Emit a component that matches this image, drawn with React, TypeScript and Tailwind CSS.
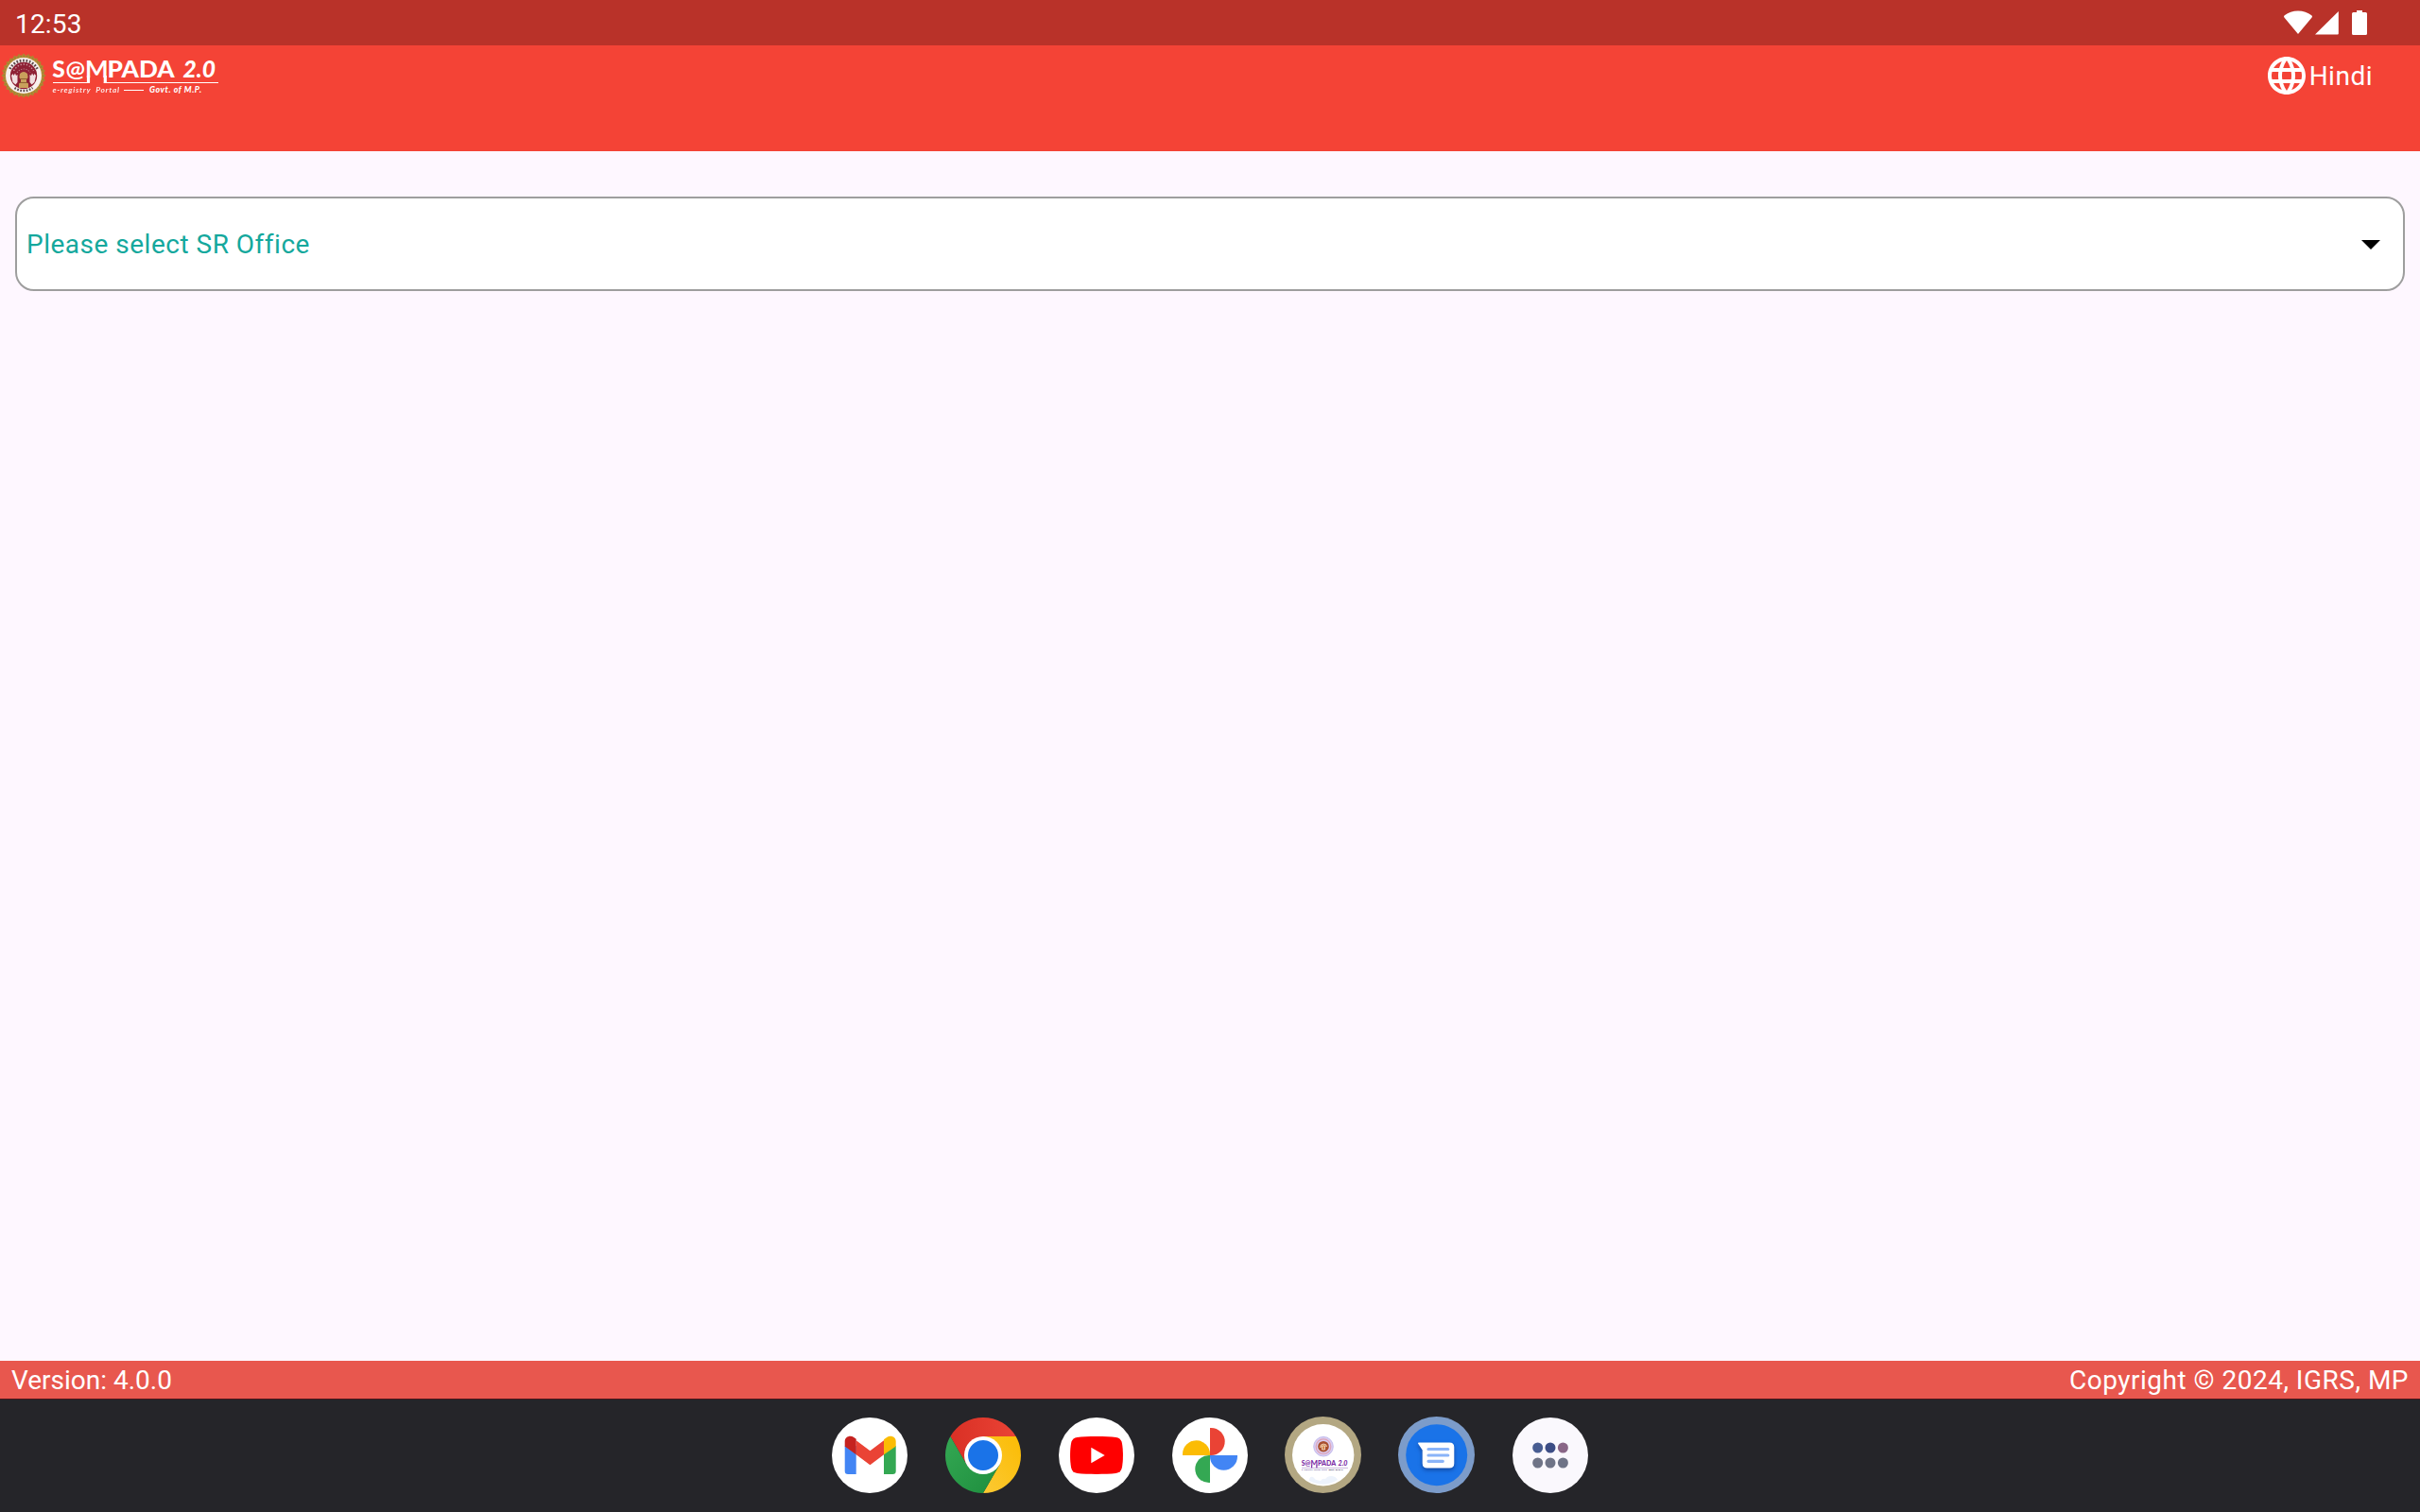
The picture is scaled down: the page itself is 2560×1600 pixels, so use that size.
import type { ReactNode } from "react";
import { MdArrowDropDown, MdLanguage } from "react-icons/md";

const BEADS = Array.from({ length: 28 }, (_, i) => (i * 360) / 28);

function Emblem() {
    return (
        <svg viewBox="-1 0 48 48" className="h-12 w-12 shrink-0 overflow-visible">
            <circle cx="24" cy="24" r="21.8" fill="#b98a35" />
            {BEADS.map((deg) => (
                <circle
                    key={deg}
                    cx="24"
                    cy="2"
                    r="1.3"
                    fill="#b5812f"
                    transform={`rotate(${deg} 24 24)`}
                />
            ))}
            <circle cx="24" cy="24" r="20.6" fill="none" stroke="#8f8a3c" strokeWidth="1.4" strokeDasharray="1.6 1.6" />
            <circle cx="24" cy="24" r="19" fill="#f8f1ee" />
            <path d="M9.500 17a16.200 16.200 0 0 1 29 0" fill="none" stroke="#5d4a4c" strokeWidth="2.800" strokeDasharray="1.700 1.700" />
            <path d="M14.500 37a16.200 16.200 0 0 0 19 0" fill="none" stroke="#5d4a4c" strokeWidth="2.400" strokeDasharray="1.700 1.500" />
            <circle cx="24" cy="24" r="14.2" fill="#8e2034" />
            <path d="M13.500 19c3-5 7-7 10.500-7s7.500 2 10.500 7" fill="none" stroke="#c9929a" strokeWidth="1.400" strokeDasharray="1.400 1.800" />
            <path d="M17 21c2-3 4.500-4 7-4s5 1 7 4" fill="none" stroke="#b97a84" strokeWidth="1.100" strokeDasharray="1.200 1.500" />
            <path d="M11 24l1.500-2 1 2 1.500-2.500 1 2.500 1.500-1v8l-2 2.500-3-2.500zM37 24l-1.500-2-1 2-1.500-2.500-1 2.500-1.500-1v8l2 2.500 3-2.500z" fill="#f1dfe0" />
            <path d="M20 22q4-4 8 0l.600 4-1.600 2v3l2 1.500V37H19v-4.500l2-1.500v-3L19.400 26z" fill="#c9a05c" />
            <path d="M20.500 27.500h7M20 31.500h8" stroke="#8a5a2c" strokeWidth=".9" />
        </svg>
    );
}

function Logo() {
    return (
        <div className="flex h-16">
            <Emblem />
            <svg
                viewBox="0 0 180 48"
                className="h-12 w-[180px] shrink-0 overflow-visible"
                fill="#fff"
                fontFamily="Lato, sans-serif"
            >
                <text x="7.300" y="26.300" fontSize="24.500" fontWeight="900" textLength="13.500" lengthAdjust="spacingAndGlyphs">S</text>
                <text x="21.500" y="25.300" fontSize="22" fontWeight="700" textLength="20.500" lengthAdjust="spacingAndGlyphs">@</text>
                {/* the stems of the M run down into the underline */}
                <text x="42.100" y="26.300" fontSize="24.500" fontWeight="700" textLength="24.600" lengthAdjust="spacingAndGlyphs">M</text>
                <path d="M45.500 24v7.500M63.300 24v7.500" stroke="#fff" strokeWidth="3.200" />
                <text x="65.500" y="26.300" fontSize="24.500" fontWeight="900" textLength="71" lengthAdjust="spacingAndGlyphs">PADA</text>
                <text x="145.500" y="26.300" fontSize="25" fontWeight="900" fontStyle="italic" textLength="34.500" lengthAdjust="spacingAndGlyphs">2.0</text>
                <path d="M8 31.500h39M61.700 31.500H183" stroke="#fff" strokeWidth="1.200" />
                <text x="7.500" y="41.600" fontSize="8.400" fontStyle="italic" fontWeight="700" textLength="70.500" opacity=".85">e-registry&#160; Portal</text>
                <path d="M83 39.500h21" stroke="#fff" strokeWidth="1" />
                <text x="110" y="41.600" fontSize="8.800" fontStyle="italic" fontWeight="900" textLength="55">Govt. of M.P.</text>
            </svg>
        </div>
    );
}

function StatusBar() {
    return (
        <div className="flex h-12 items-center justify-between bg-[#b93229] pr-14 pl-4">
            <span className="pt-1 text-[28px] leading-8 tracking-[0.2px]">12:53</span>
            <svg viewBox="0 0 90 48" className="h-12 w-[90px]" fill="#fff">
                <path d="M17 36 2.400 18.400q-1-1.200.300-2.100C6.800 13 11.500 11.400 17 11.400s10.200 1.600 14.300 4.900q1.300.900.300 2.100z" />
                <path d="M59.800 12v23.500q0 1-1 1H35z" />
                <path d="M79 11h6v2h3.500q1.500 0 1.500 1.500v21q0 1.500-1.500 1.500h-13q-1.500 0-1.500-1.500v-21q0-1.500 1.500-1.500H79z" />
            </svg>
        </div>
    );
}

function DockIcon({ children }: { children: ReactNode }) {
    return (
        <svg viewBox="0 0 80 80" className="h-20 w-20 overflow-visible">
            {children}
        </svg>
    );
}

function Dock() {
    return (
        <div className="flex h-[120px] items-start justify-center gap-10 border-t border-[#4b161a] bg-[#252529] pt-[19px]">
            {/* Gmail */}
            <DockIcon>
                <circle cx="40" cy="40" r="40" fill="#fff" />
                <path d="M13.700 30h12v30h-8.700q-3.300 0-3.300-3.300z" fill="#4285f4" />
                <path d="M55 30h12.700v26.700q0 3.300-3.300 3.300H55z" fill="#34a853" />
                <path d="M25.700 24.300 40.400 35.300 55 24.300v15L40.400 50.200 25.700 39.300z" fill="#ea4335" />
                <path d="M13.700 25.500c0-5.200 5.500-7.300 9.600-4.600l2.400 1.900v16.500l-12-8.800z" fill="#c5221f" />
                <path d="M67.700 25.500c0-5.200-5.500-7.300-9.600-4.600L55 23.300v16l12.700-8.800z" fill="#fbbc04" />
            </DockIcon>
            {/* Chrome */}
            <DockIcon>
                <defs>
                    <linearGradient id="cr-red" x1="0" x2="1">
                        <stop offset="0" stopColor="#d93025" />
                        <stop offset="1" stopColor="#ea4335" />
                    </linearGradient>
                    <linearGradient id="cr-yellow" x1="0" y1="1" x2="1" y2="0">
                        <stop offset="0" stopColor="#fcc934" />
                        <stop offset="1" stopColor="#fbbc04" />
                    </linearGradient>
                    <linearGradient id="cr-green" x1="0" y1="0" x2="1" y2="1">
                        <stop offset="0" stopColor="#34a853" />
                        <stop offset="1" stopColor="#1e8e3e" />
                    </linearGradient>
                </defs>
                <path d="M5.360 20A40 40 0 0 1 74.640 20H40L22.680 50z" fill="url(#cr-red)" />
                <path d="M74.640 20A40 40 0 0 1 40 80L57.320 50 40 20z" fill="url(#cr-yellow)" />
                <path d="M40 80A40 40 0 0 1 5.360 20L22.680 50H57.320z" fill="url(#cr-green)" />
                <circle cx="40" cy="40" r="20" fill="#fff" />
                <circle cx="40" cy="40" r="16" fill="#1a73e8" />
            </DockIcon>
            {/* YouTube */}
            <DockIcon>
                <circle cx="40" cy="40" r="40" fill="#fff" />
                <path
                    d="M40 20c8 0 15.500.300 20.500.900 3.500.500 5.700 2.500 6.400 6 1.400 8 1.400 18 0 26.200-.700 3.500-2.900 5.500-6.400 6-11 1.200-30 1.200-41 0-3.500-.500-5.700-2.500-6.400-6-1.400-8.200-1.400-18.200 0-26.200.700-3.500 2.900-5.500 6.400-6C24.500 20.300 32 20 40 20z"
                    fill="#f00"
                />
                <path d="M34.300 31.700v16.600L48.700 40z" fill="#fff" />
            </DockIcon>
            {/* Photos */}
            <DockIcon>
                <circle cx="40" cy="40" r="40" fill="#fff" />
                <path d="M40 11h1.200a14.500 14.500 0 0 1 0 29H40z" fill="#ea4335" />
                <path d="M69 40v1.200a14.500 14.500 0 0 1-29 0V40z" fill="#4285f4" />
                <path d="M40 69h-1.200a14.500 14.500 0 0 1 0-29H40z" fill="#34a853" />
                <path d="M11 40v-1.200a14.500 14.500 0 0 1 29 0V40z" fill="#fbbc04" />
            </DockIcon>
            {/* Sampada */}
            <DockIcon>
                <circle cx="39.500" cy="39.500" r="40.500" fill="#b3a782" />
                <circle cx="39.700" cy="39.700" r="32.700" fill="#fff" />
                <path d="M25 67q0-5 4-4l3 3 5 1q2-3 5-2 2-3 6-3 5 0 7 4-14 9-30 1z" fill="#edf3fc" />
                <circle cx="40" cy="30.700" r="10.300" fill="#d9cdf0" stroke="#c4bdee" strokeWidth="1" />
                <circle cx="40" cy="30.700" r="7.800" fill="none" stroke="#dda3b8" strokeWidth="1.200" />
                <circle cx="40" cy="30.700" r="5.800" fill="#a9502f" />
                <path d="M36.500 32q0-4 3.500-4t3.500 3M38.500 30h3v4h-3z" fill="#d98a4a" stroke="#f0dccb" strokeWidth=".8" />
                <g fontFamily="Lato, sans-serif" fill="#7b2aa5" fontWeight="900">
                    <text x="16.700" y="51.300" fontSize="7.200" textLength="9.700" lengthAdjust="spacingAndGlyphs">S@</text>
                    <text x="26.500" y="51.300" fontSize="7.200" textLength="7.500" lengthAdjust="spacingAndGlyphs">M</text>
                    <text x="34" y="51.300" fontSize="7.200" textLength="19.200" lengthAdjust="spacingAndGlyphs">PADA</text>
                    <text x="55.500" y="51.300" fontSize="7.200" fontStyle="italic" textLength="10" lengthAdjust="spacingAndGlyphs">2.0</text>
                    <text x="17" y="56.400" fontSize="2.400" fontStyle="italic" fill="#6a5a9a" textLength="20">e-registry Portal</text>
                    <text x="45.500" y="56.400" fontSize="2.500" fontStyle="italic" fill="#2b1d4a" textLength="15.500">Govt. of M.P.</text>
                </g>
                <path d="M27.600 50.500v2.900M32.900 50.500v2.900" stroke="#7b2aa5" strokeWidth="1.200" />
                <path d="M17 53.400h49" stroke="#a88ac8" strokeWidth=".6" />
                <path d="M38 55.400h6" stroke="#7a6aa8" strokeWidth=".5" />
            </DockIcon>
            {/* Messages */}
            <DockIcon>
                <circle cx="39.500" cy="39.500" r="40.500" fill="#7c9cca" />
                <circle cx="39.700" cy="39.700" r="32.500" fill="#1a73e8" />
                <path
                    d="M20.800 26.600h32.500q5 0 5 5v17q0 5-5 5H29.700q-5 0-5-5V34.500l-4.500-6.700q-.500-1.200.600-1.200z"
                    fill="#fff"
                    className="drop-shadow-[0_2px_2px_rgba(10,40,110,0.6)]"
                />
                <path d="M31 33.500h20.800M31 40h20.800M31 46.300h15.300" stroke="#8ab4f8" strokeWidth="3.200" strokeLinecap="round" />
            </DockIcon>
            {/* All apps */}
            <DockIcon>
                <circle cx="40" cy="40" r="40" fill="#faf8fd" />
                <circle cx="26.700" cy="32" r="5.500" fill="#485d92" />
                <circle cx="40" cy="32" r="5.500" fill="#3c4d85" />
                <circle cx="53.400" cy="32" r="5.500" fill="#896687" />
                <circle cx="26.700" cy="48" r="5.500" fill="#6f7487" />
                <circle cx="40" cy="48" r="5.500" fill="#6f7487" />
                <circle cx="53.400" cy="48" r="5.500" fill="#6f7487" />
            </DockIcon>
        </div>
    );
}

export default function App() {
    return (
        <div className="flex h-[1600px] w-[2560px] flex-col overflow-hidden bg-[#fef7ff] font-[Roboto,sans-serif] text-[28px] leading-8 text-white">
            <StatusBar />

            <header className="flex h-28 items-start justify-between bg-[#f44336] pt-2 pr-[50px]">
                <Logo />
                <button className="flex items-center">
                    <MdLanguage className="h-12 w-12" />
                    <span className="pt-0.5 tracking-[0.5px]">Hindi</span>
                </button>
            </header>

            <main className="flex-1 px-4 pt-12">
                <button className="flex h-[100px] w-full items-center justify-between rounded-[20px] border-2 border-[#9e9e9e] bg-white px-[10px]">
                    <span className="pt-0.5 tracking-[0.5px] text-[#14a89d]">Please select SR Office</span>
                    <MdArrowDropDown className="h-12 w-12 text-black" />
                </button>
            </main>

            <footer className="flex h-10 items-center justify-between bg-[#e8574e] px-3 pt-0.5">
                <span>Version: 4.0.0</span>
                <span className="tracking-[0.5px]">Copyright © 2024, IGRS, MP</span>
            </footer>

            <Dock />
        </div>
    );
}
